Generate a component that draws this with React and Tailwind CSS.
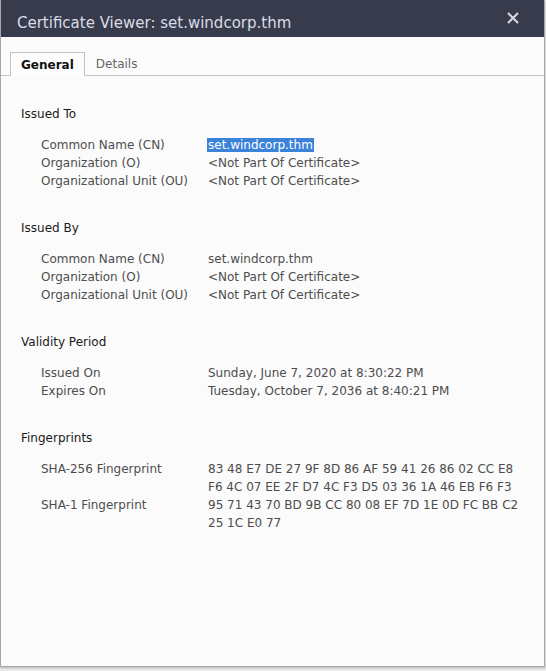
import React from "react";

const Row = ({ label, children }) => (
  <div className="flex">
    <div className="w-[167px] shrink-0">{label}</div>
    <div>{children}</div>
  </div>
);

const Section = ({ title, children }) => (
  <div className="mb-[29px]">
    <div className="h-[18px] leading-[18px] text-[#1a1a1a] pl-[20px]">{title}</div>
    <div className="mt-[13px] pl-[40px] text-[#4d4d4d] leading-[18px]">{children}</div>
  </div>
);

export default function App() {
  return (
    <div className="w-[546px] h-[671px] bg-[#ebebeb] relative" style={{ fontFamily: '"DejaVu Sans", sans-serif' }}>
      <div className="w-[545px] h-[667px] flex flex-col bg-[#fbfbfb] border-l border-r border-b border-[#a8a8a8] shadow-[0_1px_2px_rgba(0,0,0,0.25)]">
        <div className="h-[37px] bg-[#383b4b] flex items-end justify-between pl-[16px] pr-[25px] shrink-0">
          <div className="text-[15px] text-[#d8dce8] leading-[20px] pb-[4px]">Certificate Viewer: set.windcorp.thm</div>
          <svg width="12" height="12" viewBox="0 0 12 12" className="mb-[13px]">
            <path d="M1 1 L11 11 M11 1 L1 11" stroke="#d6d9e3" strokeWidth="2" />
          </svg>
        </div>
        <div className="mt-[15px] flex items-end border-b border-[#c4c4c4] pl-[9px] text-[12px] h-[24px] shrink-0">
          <div className="h-[24px] px-[10px] border border-b-0 border-[#c4c4c4] bg-[#fdfdfd] font-bold text-[#111] flex items-center -mb-px relative">General</div>
          <div className="h-[23px] px-[11px] text-[#666] flex items-center">Details</div>
        </div>
        <div className="pt-[29px] text-[12px]">
          <Section title="Issued To">
            <Row label="Common Name (CN)">
              <span className="bg-[#3b82d9] text-white px-px -mx-px">set.windcorp.thm</span>
            </Row>
            <Row label="Organization (O)">&lt;Not Part Of Certificate&gt;</Row>
            <Row label="Organizational Unit (OU)">&lt;Not Part Of Certificate&gt;</Row>
          </Section>
          <Section title="Issued By">
            <Row label="Common Name (CN)">set.windcorp.thm</Row>
            <Row label="Organization (O)">&lt;Not Part Of Certificate&gt;</Row>
            <Row label="Organizational Unit (OU)">&lt;Not Part Of Certificate&gt;</Row>
          </Section>
          <Section title="Validity Period">
            <Row label="Issued On">Sunday, June 7, 2020 at 8:30:22 PM</Row>
            <Row label="Expires On">Tuesday, October 7, 2036 at 8:40:21 PM</Row>
          </Section>
          <Section title="Fingerprints">
            <Row label="SHA-256 Fingerprint">
              <div>83 48 E7 DE 27 9F 8D 86 AF 59 41 26 86 02 CC E8</div>
              <div>F6 4C 07 EE 2F D7 4C F3 D5 03 36 1A 46 EB F6 F3</div>
            </Row>
            <Row label="SHA-1 Fingerprint">
              <div>95 71 43 70 BD 9B CC 80 08 EF 7D 1E 0D FC BB C2</div>
              <div>25 1C E0 77</div>
            </Row>
          </Section>
        </div>
      </div>
    </div>
  );
}
